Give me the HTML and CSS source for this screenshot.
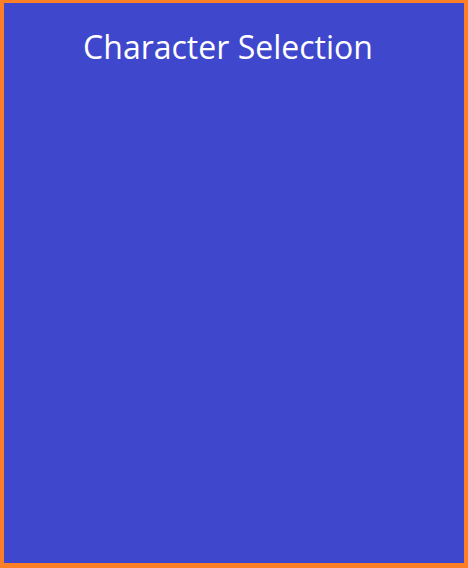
FILE: index.html
```html
<!DOCTYPE html>
<html>
<head>
<meta charset="utf-8">
<link rel="stylesheet" href="styles.css">
</head>
<body>
<main class="frame">
  <h1 class="title">Character Selection</h1>
</main>
</body>
</html>
```
FILE: styles.css
```css
html, body {
  margin: 0;
  padding: 0;
  width: 468px;
  height: 568px;
  overflow: hidden;
}
.frame {
  box-sizing: border-box;
  width: 468px;
  height: 568px;
  background: #3f48cc;
  border-style: solid;
  border-color: #ff7f27;
  border-width: 3px 4px 5px 4px;
  display: flex;
  flex-direction: column;
  align-items: center;
}
.title {
  margin: 24px 12px 0 0;
  font-family: "Open Sans", "Noto Sans", sans-serif;
  font-weight: 400;
  font-size: 32px;
  line-height: 40px;
  color: #ffffff;
}
```
